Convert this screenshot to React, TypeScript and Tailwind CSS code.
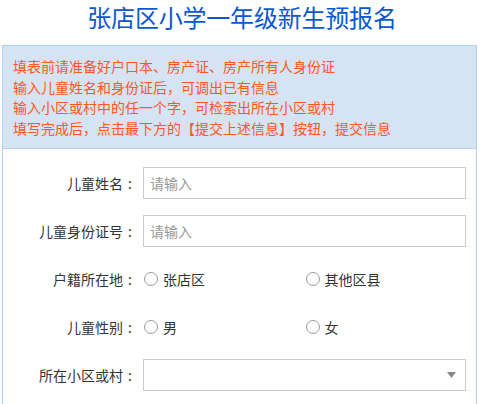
import React, { useState } from 'react';

const font = { fontFamily: '"Microsoft YaHei", "Noto Sans CJK SC", "Noto Sans", sans-serif' };

const notices = [
  '填表前请准备好户口本、房产证、房产所有人身份证',
  '输入儿童姓名和身份证后，可调出已有信息',
  '输入小区或村中的任一个字，可检索出所在小区或村',
  '填写完成后，点击最下方的【提交上述信息】按钮，提交信息',
];

function Radio({ label, checked, onClick }: { label: string; checked: boolean; onClick: () => void }) {
  return (
    <label className="flex items-center cursor-pointer" onClick={onClick}>
      <span className="w-[14px] h-[14px] rounded-full border border-[#999] bg-white flex items-center justify-center ml-[1px]">
        {checked && <span className="w-[6px] h-[6px] rounded-full bg-[#0b57d0]" />}
      </span>
      <span className="ml-[5px] text-[14px] text-[#333]">{label}</span>
    </label>
  );
}

function Row({ label, children }: { label: string; children: React.ReactNode }) {
  return (
    <div className="flex items-center h-[32px] mb-[16px]">
      <div className="w-[134px] flex justify-end text-[14px] text-[#333]">
        <span>{label}</span>
        <span className="w-[14px] text-center">:</span>
      </div>
      <div className="ml-[6px] w-[323px]">{children}</div>
    </div>
  );
}

export default function App() {
  const [huji, setHuji] = useState('');
  const [sex, setSex] = useState('');

  return (
    <div className="bg-white w-[484px] h-[404px] overflow-hidden" style={font}>
      <h1 className="h-[34px] leading-[34px] mb-[11px] text-center text-[24px] text-[#0b57d0] font-normal tracking-[-0.2px]">
        张店区小学一年级新生预报名
      </h1>

      <div className="ml-[2px] w-[475px] border border-[#afd2f3] min-h-[400px]">
        <div className="bg-[#d6e3f2] border-b border-[#afd2f3] px-[10px] py-[10px] text-[14px] leading-[20.6px] text-[#ff5722]">
          {notices.map((n) => (
            <div key={n}>{n}</div>
          ))}
        </div>

        <div className="pt-[18px]">
          <Row label="儿童姓名">
            <input
              placeholder="请输入"
              className="w-full h-[32px] border border-[#ccc] px-[6px] text-[14px] text-[#333] placeholder:text-[#999] outline-none"
            />
          </Row>
          <Row label="儿童身份证号">
            <input
              placeholder="请输入"
              className="w-full h-[32px] border border-[#ccc] px-[6px] text-[14px] text-[#333] placeholder:text-[#999] outline-none"
            />
          </Row>
          <Row label="户籍所在地">
            <div className="grid grid-cols-2">
              <Radio label="张店区" checked={huji === 'a'} onClick={() => setHuji('a')} />
              <Radio label="其他区县" checked={huji === 'b'} onClick={() => setHuji('b')} />
            </div>
          </Row>
          <Row label="儿童性别">
            <div className="grid grid-cols-2">
              <Radio label="男" checked={sex === 'm'} onClick={() => setSex('m')} />
              <Radio label="女" checked={sex === 'f'} onClick={() => setSex('f')} />
            </div>
          </Row>
          <Row label="所在小区或村">
            <div className="w-full h-[32px] border border-[#ccc] flex items-center justify-end pr-[9px]">
              <svg width="9" height="6" viewBox="0 0 9 6">
                <path d="M0 0 L9 0 L4.5 6 Z" fill="#888" />
              </svg>
            </div>
          </Row>
        </div>
      </div>
    </div>
  );
}
